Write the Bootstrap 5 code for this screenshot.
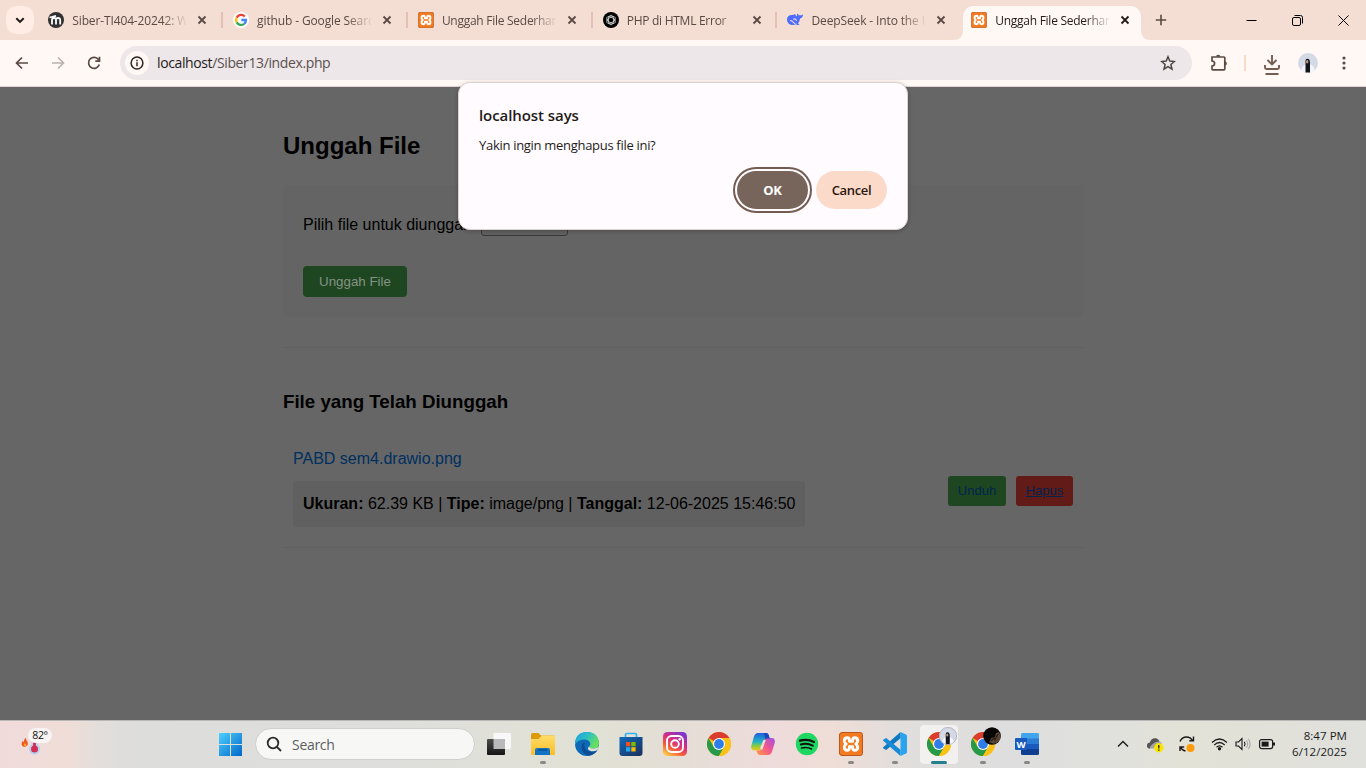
<!DOCTYPE html>
<html lang="id">
<head>
<meta charset="utf-8">
<title>Unggah File Sederhana</title>
<meta name="viewport" content="width=device-width, initial-scale=1">
<link href="https://cdn.jsdelivr.net/npm/bootstrap@5.3.0/dist/css/bootstrap.min.css" rel="stylesheet">
<style>
body{width:1366px;height:768px;overflow:hidden;font-family:"Open Sans","Noto Sans",sans-serif;font-size:12px;color:#1f1b19}
svg{display:block;flex:none}
.tabstrip{height:40px;background:#f4ddd3;padding-left:6px}
.tabmenu{width:28px;height:28px;border-radius:10px;background:#feece5;margin:6px 4.3px 0 0}
.tab-item{width:184.8px;height:40px;padding-left:10px;gap:8px;flex:none;color:#5b4a43}
.tab-item.sep::after{content:"";position:absolute;right:0;top:12px;width:2px;height:16px;background:#e2c0b3}
.tab-title{width:114px;font-size:12px;letter-spacing:-.27px;padding-top:1px;overflow:hidden;white-space:nowrap;-webkit-mask-image:linear-gradient(90deg,#000 90px,transparent 116px)}
.tab-title.wide{letter-spacing:-.13px}
.tab-on{color:#221a17}
.tab-on::before{content:"";position:absolute;z-index:0;left:1px;top:6px;width:178px;height:34px;background:#fff8f5;border-radius:10px 10px 0 0}
.tab-on{left:-.6px}
.tab-on>*{position:relative;z-index:1}
.flare{position:absolute!important;bottom:0;width:10px;height:10px}
.win{width:46px}
.toolbar{height:47px;background:#fff8f5;border-bottom:1px solid #dcd5d3;padding:0 14px}
.omni{width:1072px;height:34px;border-radius:17px;background:#ede7ea;margin-left:18px;padding:0 16px 0 5px}
.siteinfo{width:24px;height:24px;background:#fff8f5}
.url{font-size:14px;color:#5a504c;margin-left:8px;letter-spacing:-.38px;padding-bottom:1px}
.url b{font-weight:400;color:#1f1b19}
.viewport{height:633px;background:#666;font-family:"Liberation Sans",Arial,sans-serif;font-size:16px;line-height:18px;color:#000}
.page{width:800px}
.page h2{font-size:24px;line-height:28px;font-weight:700;margin:0 0 25px;padding-top:45px}
.upload{background:#646464;border-radius:5px;height:132px;padding:29px 20px 0}
.filebtn{width:87px;height:21px;border:1px solid #3a3a3a;border-radius:3px;margin-left:5px;background:#606060}
.green{background:#1e4620}.red{background:#621b16}
.send{width:104px;height:31px;border:0;border-radius:4px;color:#869387;font-size:13.33px;margin-top:30px}
.rule{height:1px;background:#5f5f5f}
.page h3{font-size:18.72px;line-height:22px;font-weight:700;margin:43px 0 37px}
.entry{height:98px;padding:0 10px;border-bottom:1px solid #5f5f5f}
.fname{color:#00305f}
.meta{background:#606060;border-radius:4px;padding:14px 10px;height:46px;margin-top:13px;white-space:nowrap;width:512px}
.act{width:58px;height:30px;border-radius:3px;color:#00254e;font-size:13px;padding:6px 0;text-align:center;text-decoration:none}
.act:last-child{width:57px;text-decoration:underline}
.prompt{left:458px;top:82px;width:450px;height:148px;border:1px solid #dcd3d1;border-radius:12px;background:#fffbff;box-shadow:0 1px 4px rgba(0,0,0,.25);padding:22px 20px 20px;z-index:10}
.prompt .ttl{font-size:15px;font-weight:600;line-height:20px;letter-spacing:-.07px}
.prompt .msg{font-size:13px;line-height:18px;margin-top:11px;letter-spacing:-.3px}
.pill{height:38px;border-radius:19px;font-size:13px;font-weight:600;border:0;letter-spacing:-.35px;padding:2px 0 0}
.pill.ok{width:71px;background:#77655c;color:#fff;outline:2px solid #735c51;outline-offset:2px;font-weight:700}
.pill.no{width:71px;background:#fbdaca;color:#2a1710}
.taskbar{height:48px;border-top:1px solid #b9b8b6;padding-bottom:1px;background:linear-gradient(90deg,#f0dbdb 0,#f0ddd7 68px,#e2dedb 100px,#dddddc 140px,#dedfdc 380px,#e1e1d5 590px,#e4ded6 680px,#eedbdb 768px,#efddd7 835px,#e1dedc 900px,#dedede 1010px,#e1e1dc 1130px,#e3e2d7 1180px,#e0e0dc 1366px)}
.weather{width:208px;padding-left:20px}
.temp{left:28px;top:7px;width:24px;height:15px;border-radius:8px;background:#f7f4f3;font-size:10.5px;letter-spacing:-.3px;line-height:15px;color:#111}
.search{width:220px;height:32px;border-radius:16px;background:#f7f7f6;border:1px solid #cfcfcd;margin:0 2px 0 3px;padding-left:10px;color:#5e5e5e;font-size:14px;letter-spacing:-.3px}
.tk{width:44px;height:46px}
.tk.run::after{content:"";position:absolute;bottom:3px;left:19px;width:6px;height:3px;border-radius:2px;background:#8a8886}
.tk.cur::before{content:"";position:absolute;left:3px;top:4px;width:38px;height:39px;border-radius:4px;background:#f2f1f0}
.tk.cur::after{left:14px;width:16px;background:#267f8f}
.tk svg{position:relative}
.clock{width:80px;text-align:right;line-height:16px;font-size:11.5px;letter-spacing:.05px;color:#1a1a1a}
</style>
</head>
<body>
<svg width="0" height="0" class="position-absolute">
<defs>
<linearGradient id="gw" x2="1" y2="1"><stop stop-color="#4fd0ff"/><stop offset="1" stop-color="#0067c8"/></linearGradient>
<linearGradient id="gf" x2="0" y2="1"><stop stop-color="#ffdd6a"/><stop offset="1" stop-color="#f8bd26"/></linearGradient>
<linearGradient id="ge" x1="0" x2="1" y2=".5"><stop stop-color="#1e9ddf"/><stop offset=".5" stop-color="#2bbfc6"/><stop offset="1" stop-color="#6ae05a"/></linearGradient>
<linearGradient id="gs" x2="1" y2="1"><stop stop-color="#0f6bbd"/><stop offset="1" stop-color="#1c2f5a"/></linearGradient>
<linearGradient id="gi" x1=".2" y1="1" x2=".8" y2="0"><stop stop-color="#ffc94a"/><stop offset=".3" stop-color="#f65d38"/><stop offset=".6" stop-color="#d62c86"/><stop offset="1" stop-color="#7538d2"/></linearGradient>
<linearGradient id="gc1" x2="0" y2="1"><stop stop-color="#1e5fdc"/><stop offset=".5" stop-color="#22b4c6"/><stop offset=".75" stop-color="#8bcc3c"/><stop offset="1" stop-color="#f6c51e"/></linearGradient>
<linearGradient id="gc2" x1="1" x2="0" y2="1"><stop stop-color="#a14fe6"/><stop offset=".5" stop-color="#f2588c"/><stop offset="1" stop-color="#ff9a3e"/></linearGradient>
<linearGradient id="gk" x2="0" y2="1"><stop stop-color="#4c4c4c"/><stop offset="1" stop-color="#151515"/></linearGradient>
<symbol id="x" viewBox="0 0 16 16"><path d="M4.500 4.500l7 7m0-7l-7 7" stroke="currentColor" stroke-width="1.800"/></symbol>
<symbol id="xampp" viewBox="0 0 24 24"><rect x=".5" y=".5" width="23" height="23" rx="2.500" fill="#f37a20" stroke="#b9581a"/><path d="M8.300 5.700q-3 0-3 3 0 2 1.900 3.300-1.900 1.300-1.900 3.300 0 3 3 3 2 0 2-2v-1.600h3.400v1.600q0 2 2 2 3 0 3-3 0-2-1.900-3.300 1.900-1.300 1.900-3.300 0-3-3-3-2 0-2 2v1.600h-3.400v-1.600q0-2-2-2z" fill="none" stroke="#fff" stroke-width="2.900" stroke-linejoin="round"/></symbol>
<symbol id="chrome" viewBox="0 0 24 24"><circle cx="12" cy="12" r="12" fill="#fbc116"/><path d="M12 12L1.600 6A12 12 0 0 1 22.400 6H12z" fill="#dc3b30"/><path d="M1.600 6A12 12 0 0 0 12 24l5.200-9L12 12 6.800 15z" fill="#269a48"/><path d="M12 24A12 12 0 0 0 22.400 6H12l5.200 9z" fill="#fbc116"/><circle cx="12" cy="12" r="6" fill="#fff"/><circle cx="12" cy="12" r="4.900" fill="#2f7de9"/></symbol>
<symbol id="person" viewBox="0 0 20 20"><circle cx="10" cy="10" r="10" fill="#d4d9e6"/><path d="M3.500 17.500q.5-5 4-6h5q3.500 1 4 6-6 4.500-13 0z" fill="#f4f7fa"/><path d="M7.500 19.500V10q-.5-4.300 2-4.300T12 10v9.500z" fill="#12141c"/><ellipse cx="9.200" cy="8.800" rx="1.200" ry="1.700" fill="#c49b83"/></symbol>
</defs>
</svg>

<header class="tabstrip d-flex">
  <div class="tabmenu d-flex align-items-center justify-content-center"><svg width="12" height="12" fill="none" stroke="#1f1b19" stroke-width="2"><path d="M2.300 4.200L6 7.900l3.700-3.700"/></svg></div>
  <div class="tab-item sep position-relative d-flex align-items-center"><svg width="16" height="16" viewBox="0 0 16 16"><circle cx="8" cy="8" r="8" fill="#303030"/><path d="M4 12.500V7.500q0-1.500 2-1.500t2 1.500v5m0-5q0-1.500 2-1.500t2.200 1.500v5M1.500 5.500L8 3.800" fill="none" stroke="#fff" stroke-width="1.800"/></svg><span class="tab-title wide">Siber-TI404-20242: W11</span><svg width="16" height="16"><use href="#x"/></svg></div>
  <div class="tab-item sep position-relative d-flex align-items-center"><svg width="16" height="16" viewBox="0 0 16 16"><circle cx="8" cy="8" r="8" fill="#fff"/><g fill="none" stroke-width="2.300"><path d="M11.800 4.500A5 5 0 0 0 3.700 5.600" stroke="#ea4335"/><path d="M3.700 5.600a5 5 0 0 0 0 4.800" stroke="#fbbc05"/><path d="M3.700 10.400a5 5 0 0 0 7.500 1.400" stroke="#34a853"/><path d="M11.200 11.800A5 5 0 0 0 13 8H8.300" stroke="#4285f4"/></g></svg><span class="tab-title wide">github - Google Search</span><svg width="16" height="16"><use href="#x"/></svg></div>
  <div class="tab-item sep position-relative d-flex align-items-center"><svg width="16" height="16"><use href="#xampp"/></svg><span class="tab-title">Unggah File Sederhana</span><svg width="16" height="16"><use href="#x"/></svg></div>
  <div class="tab-item sep position-relative d-flex align-items-center"><svg width="16" height="16" viewBox="0 0 16 16"><circle cx="8" cy="8" r="8" fill="#000"/><g fill="none" stroke="#ddd" stroke-width=".8"><ellipse cx="8" cy="8" rx="2.600" ry="4.800"/><ellipse cx="8" cy="8" rx="2.600" ry="4.800" transform="rotate(60 8 8)"/><ellipse cx="8" cy="8" rx="2.600" ry="4.800" transform="rotate(120 8 8)"/></g></svg><span class="tab-title">PHP di HTML Error</span><svg width="16" height="16"><use href="#x"/></svg></div>
  <div class="tab-item position-relative d-flex align-items-center"><svg width="16" height="16" viewBox="0 0 16 16"><path d="M0 8q0-5 5-5 2 0 3-1 .5 1.500 2 2.500.3-1.500 0-3 1.500.5 1.800 1.700 2 .5 4.200-.7-.2 3.500-3 4-.2 3.200-2 5l1.500 1.200q-2 .8-3.500-.2Q1 14.500 0 8z" fill="#4d6bfe"/><path d="M2 7q3-1 5 2t4 3q-2 1.500-4 .5Q3 12 2 7z" fill="#4d6bfe"/><path d="M3 8.500q2 0 3.500 2t3 1.800M6.300 7.200q2-1 3.300 1.500" stroke="#f4ddd3" stroke-width="1.200" fill="none"/></svg><span class="tab-title wide">DeepSeek - Into the Unknown</span><svg width="16" height="16"><use href="#x"/></svg></div>
  <div class="tab-item tab-on position-relative d-flex align-items-center"><svg class="flare" style="left:-9px" viewBox="0 0 10 10"><path d="M10 0v10H0Q10 10 10 0" fill="#fff8f5"/></svg><svg width="16" height="16" style="margin-left:-.4px"><use href="#xampp"/></svg><span class="tab-title">Unggah File Sederhana</span><svg width="16" height="16"><use href="#x"/></svg><svg class="flare" style="left:179px" viewBox="0 0 10 10"><path d="M0 0v10h10Q0 10 0 0" fill="#fff8f5"/></svg></div>
  <div class="d-flex align-items-center justify-content-center" style="width:22px;margin-left:3px"><svg width="12" height="12" stroke="#5b4a43" stroke-width="1.600"><path d="M6 .8v10.400M.8 6h10.400"/></svg></div>
  <div class="d-flex ms-auto me-0">
    <div class="win d-flex align-items-center justify-content-center"><svg width="11" height="11"><path d="M.5 5.500h10" stroke="#000"/></svg></div>
    <div class="win d-flex align-items-center justify-content-center"><svg width="11" height="11" fill="none" stroke="#000"><rect x=".5" y="2.500" width="8" height="8" rx="1.500"/><path d="M2.500.5h6q2 0 2 2v6"/></svg></div>
    <div class="win d-flex align-items-center justify-content-center"><svg width="11" height="11" stroke="#000"><path d="M.5.5l10 10m0-10l-10 10"/></svg></div>
  </div>
</header>

<nav class="toolbar d-flex align-items-center">
  <svg width="16" height="16" fill="none" stroke="#5b4a43" stroke-width="1.700"><path d="M14 8H3m5-5.500L2.500 8 8 13.500"/></svg>
  <svg style="margin-left:20px" width="16" height="16" fill="none" stroke="#bcb3af" stroke-width="1.700"><path d="M2 8h11M8 2.500L13.500 8 8 13.500"/></svg>
  <svg style="margin-left:20px" width="16" height="16" fill="none" stroke="#5b4a43" stroke-width="1.700"><path d="M13.300 9.500A5.500 5.500 0 1 1 12 4l1.200 1.400M13.500 1.800v4.400H9.300"/></svg>
  <div class="omni d-flex align-items-center">
    <div class="siteinfo rounded-circle d-flex align-items-center justify-content-center"><svg width="14" height="14" fill="none" stroke="#2c2522" stroke-width="1.500"><circle cx="7" cy="7" r="5.900"/><path d="M7 6.200v4M7 3.700v1.500"/></svg></div>
    <span class="url"><b>localhost</b>/Siber13/index.php</span>
    <svg class="ms-auto" width="16" height="16" fill="none" stroke="#4d4542" stroke-width="1.500"><path d="M8 1.800l1.800 4.300 4.600.4-3.500 3 1.100 4.600L8 11.600l-4 2.500 1.100-4.600-3.500-3 4.600-.4z"/></svg>
  </div>
  <svg style="margin-left:18px" width="18" height="18" fill="none" stroke="#5b4a43" stroke-width="1.700"><path d="M2 3h12q.8 0 .8.800V15q0 .8-.8.800H2.800Q2 15.800 2 15v-3q2.600-.2 2.600-2.500T2 7z"/><path d="M6.700 2.500q1.500-2 3 0M15 8q2 1.500 0 3" fill="#5b4a43"/></svg>
  <div style="width:2px;height:16px;background:#fbdaca;margin-left:16px"></div>
  <svg style="margin-left:17px;margin-top:3px" width="20" height="24" fill="none" stroke="#735c51" stroke-width="1.900"><path d="M9 2v9.500M4.500 7L9 11.500 13.500 7M2 12v2.500q0 1.500 1.500 1.500h11q1.500 0 1.500-1.500V12M2.500 21h13"/></svg>
  <svg style="margin-left:15px" width="20" height="20"><use href="#person"/></svg>
  <svg style="margin-left:24px" width="4" height="16" fill="#5b4a43"><circle cx="2" cy="3" r="1.600"/><circle cx="2" cy="8" r="1.600"/><circle cx="2" cy="13" r="1.600"/></svg>
</nav>

<main class="viewport">
  <div class="page mx-auto">
    <h2>Unggah File</h2>
    <div class="upload">
      <div class="d-flex align-items-center" style="height:22px"><span>Pilih file untuk diunggah:</span><span class="filebtn"></span></div>
      <button class="send green fw-normal">Unggah File</button>
    </div>
    <div class="rule" style="margin-top:30px"></div>
    <h3>File yang Telah Diunggah</h3>
    <div class="entry d-flex">
      <div>
        <div class="fname">PABD sem4.drawio.png</div>
        <div class="meta"><b>Ukuran:</b> 62.39 KB | <b>Tipe:</b> image/png | <b>Tanggal:</b> 12-06-2025 15:46:50</div>
      </div>
      <div class="d-flex ms-auto" style="gap:10px;padding-top:26px"><a class="act green" href="#">Unduh</a><a class="act red" href="#">Hapus</a></div>
    </div>
  </div>
</main>

<div class="prompt position-absolute">
  <div class="ttl">localhost says</div>
  <div class="msg">Yakin ingin menghapus file ini?</div>
  <div class="d-flex justify-content-end" style="gap:8px;margin-top:17px"><button class="pill ok">OK</button><button class="pill no">Cancel</button></div>
</div>

<footer class="taskbar d-flex align-items-center">
  <div class="weather position-relative h-100">
    <svg width="24" height="40" viewBox="0 0 24 40"><path d="M4.500 26q-3.500-1-2.800-4 .3-1.300 1-2 .3 1 1 1 .3-2.700 2-4.200.3 2.400 1.700 3.700 1.600 4.500-2.900 5.500z" fill="#ed5a24"/><path d="M4.800 25.500q-1.600-1.500.2-3.500 2 2 .8 3.500z" fill="#ffb638"/><circle cx="14.500" cy="28" r="5.500" fill="#b5d3f1"/><rect x="11.500" y="16" width="6" height="12" rx="3" fill="#b5d3f1"/><circle cx="14.500" cy="28" r="3.500" fill="#d62d55"/><path d="M14.500 19v8" stroke="#d62d55" stroke-width="2.800"/></svg>
    <div class="temp position-absolute text-center">82°</div>
  </div>
  <div class="tk d-flex align-items-center justify-content-center"><svg width="23" height="23" fill="url(#gw)"><path d="M0 0h11v11H0zM12 0h11v11H12zM0 12h11v11H0zM12 12h11v11H12z"/></svg></div>
  <div class="search d-flex align-items-center"><svg width="16" height="16" fill="none" stroke="#2b2b2b" stroke-width="1.800"><circle cx="7" cy="7" r="5.300"/><path d="M11 11l4 4"/></svg><span style="margin-left:10px">Search</span></div>
  <div class="tk d-flex align-items-center justify-content-center"><svg width="24" height="24"><rect x="6.500" y="1" width="17.500" height="16" rx="1" fill="#f8f8f8"/><rect y="7" width="18" height="16" rx="1" fill="url(#gk)"/><path d="M6.500 7H18v10H6.500z" fill="#b9b9b9"/></svg></div>
  <div class="tk run position-relative d-flex align-items-center justify-content-center"><svg width="24" height="24"><path d="M0 2.500Q0 1 1.500 1h6L10 3.500h13v8H0z" fill="#dc9b0b"/><path d="M0 7h7.500L11 3.500h13V22q0 1-1 1H1q-1 0-1-1z" fill="url(#gf)"/><path d="M4 23v-5q0-2 2-2h11q2 0 2 2v5z" fill="#1273c4"/><path d="M7 18h9" stroke="#0b4f93" stroke-width="1.500"/></svg></div>
  <div class="tk d-flex align-items-center justify-content-center"><svg width="24" height="24"><circle cx="12" cy="12" r="12" fill="#0d6ab8"/><path d="M0 11Q1 0 12 0t12 11q0 5.500-6 5.500-4 0-3.500-2.500 1.500-1.500.5-3.500-1.500-3-5.500-3Q2 7.500 0 13z" fill="url(#ge)"/><path d="M8 10.500q-4.500 9 5 13 5.500 0 9.300-5-9.300 3.500-12.300-2.500-1.500-3 0-5.500z" fill="#104c92"/><path d="M24 12q0 4.500-6 4.500-4 0-3.500-2.500Q11 17 15 18.700q4 1.300 7.300-.7Q24 16 24 12z" fill="#e1e1d7"/></svg></div>
  <div class="tk d-flex align-items-center justify-content-center"><svg width="24" height="24"><path d="M6.500 6V2.800q0-1.300 1.300-1.300h8.400q1.300 0 1.300 1.300V6" fill="none" stroke="#32b2ee" stroke-width="1.700"/><path d="M.5 5h23v16q0 3-3 3h-17q-3 0-3-3z" fill="url(#gs)"/><path d="M7 10h4.300v4.300H7z" fill="#f25022"/><path d="M12.300 10h4.300v4.300h-4.300z" fill="#7fba00"/><path d="M7 15.200h4.300v4.300H7z" fill="#23a9f1"/><path d="M12.300 15.200h4.300v4.300h-4.300z" fill="#ffb900"/></svg></div>
  <div class="tk d-flex align-items-center justify-content-center"><svg width="24" height="24"><rect width="24" height="24" rx="4.500" fill="url(#gi)"/><g fill="none" stroke="#fff" stroke-width="1.900"><rect x="4" y="4" width="16" height="16" rx="4.500"/><circle cx="12" cy="12" r="3.800"/></g><circle cx="16.700" cy="7.300" r="1.200" fill="#fff"/></svg></div>
  <div class="tk d-flex align-items-center justify-content-center"><svg width="24" height="24"><use href="#chrome"/></svg></div>
  <div class="tk d-flex align-items-center justify-content-center"><svg width="24" height="24"><path d="M7 1h8q2 0 2.700 2l1 3.500h-3q-2 0-2.700 2L10.500 16q-.8 2.500-3 2.500H3Q-.5 18 .3 13.500L3 4.500Q4 1 7 1z" fill="url(#gc1)"/><path d="M17 23H9q-2 0-2.700-2l-.8-2.500H8q2 0 2.700-2L13 8.500q.8-2.500 3-2.500h5q3.500.5 2.700 5L21 19.500q-1 3.500-4 3.500z" fill="url(#gc2)"/><path d="M13 1h2q2 0 2.700 2l1 3.500h-3q-1 0-1.700.700z" fill="#1849bd"/><path d="M9.300 15.500l3.200-7.500h2.300l-3 8.500q-.5 1-1.500 1.500z" fill="#f0dcdb"/></svg></div>
  <div class="tk d-flex align-items-center justify-content-center"><svg width="24" height="24"><circle cx="12" cy="12" r="11.200" fill="#1ed760"/><g fill="none" stroke="#111" stroke-linecap="round"><path d="M5 8.700q7.500-2.200 14 1.300" stroke-width="2.300"/><path d="M5.800 12.500q6.500-1.800 12 1.200" stroke-width="1.900"/><path d="M6.500 16q5.500-1.500 10 1" stroke-width="1.500"/></g></svg></div>
  <div class="tk run position-relative d-flex align-items-center justify-content-center"><svg width="24" height="24"><use href="#xampp"/></svg></div>
  <div class="tk run position-relative d-flex align-items-center justify-content-center"><svg width="24" height="24"><path d="M17.500 0L23 2.400Q24 3 24 4v16q0 1-1 1.600L17.500 24z" fill="#2aa4ee"/><path d="M17.500 0v6.300L3.200 18 .5 16.600Q-.3 16 .5 15z" fill="#0d79c3"/><path d="M17.500 24v-6.300L3.200 6 .5 7.400q-.8.700 0 1.600z" fill="#178bd8"/></svg></div>
  <div class="tk run cur position-relative d-flex align-items-center justify-content-center"><svg width="24" height="24"><use href="#chrome"/></svg><svg class="position-absolute" style="left:22px;top:6px" width="18" height="18"><use href="#person"/><circle cx="9" cy="9" r="8.600" fill="none" stroke="#a8abb4" stroke-width=".7"/></svg></div>
  <div class="tk run position-relative d-flex align-items-center justify-content-center"><svg width="24" height="24"><use href="#chrome"/></svg><svg class="position-absolute" style="left:22px;top:6px" width="18" height="18"><circle cx="9" cy="9" r="8.800" fill="#080706"/><path d="M6 15q2-2 2-4l4-1 1-4 3-1q3 5 0 9-4 5-10 1z" fill="#594535"/><path d="M8 14l3-3 1 2 3-6" stroke="#2b2018" stroke-width="1.300" fill="none"/></svg></div>
  <div class="tk run position-relative d-flex align-items-center justify-content-center"><svg width="24" height="24"><path d="M6 2.500Q6 1 7.500 1h15Q24 1 24 2.500V7H6z" fill="#41a5ee"/><path d="M6 6.500h18V12H6z" fill="#2b7cd3"/><path d="M6 12h18v5.500H6z" fill="#185abd"/><path d="M6 17h18v4.500q0 1.500-1.500 1.500h-15Q6 23 6 21.500z" fill="#103f91"/><rect y="6" width="12" height="12" rx="1" fill="#185abd"/><text x="6" y="15.500" text-anchor="middle" font-family="Open Sans" font-size="9.500" font-weight="700" fill="#fff">W</text></svg></div>
  <div class="d-flex align-items-center ms-auto" style="margin-right:19px">
    <svg width="12" height="12" fill="none" stroke="#1a1a1a" stroke-width="1.400"><path d="M1 8.500l5-5 5 5"/></svg>
    <svg style="margin-left:17px" width="18" height="18"><path d="M4 13.500q-3.500-.3-3-3.500.3-2.300 3-2.600Q5.300 3 9.500 3.200q3 .3 4 3.300 2.500.6 2.200 3.500l-5 3.500z" fill="#a2a2a2"/><path d="M4 13.500q-3.500-.3-3-3.500.3-2.300 3-2.600Q5.300 3 9.500 3.200q3 .3 4 3.300-4-.5-7.500 3-2.500 1.500-2 4z" fill="#555"/><circle cx="12.800" cy="12.800" r="4.700" fill="#fbe400"/><path d="M12.800 10v3.500m0 1v1.300" stroke="#222" stroke-width="1.300"/></svg>
    <svg style="margin-left:14px" width="18" height="18" fill="none" stroke="#1a1a1a" stroke-width="1.400"><path d="M2 6.500Q4 2 8.500 2q4 0 6 3.500M15.500 1.500v4.200h-4.200M7.500 16Q4 15.500 2.500 12M2 16v-4h4.200"/><circle cx="12.500" cy="13" r="4" fill="#ff9a0a" stroke="none"/></svg>
    <svg style="margin-left:15px" width="17" height="14" fill="none" stroke="#1a1a1a" stroke-width="1.200"><path d="M1 5.500q7.500-7 15 0M3.300 8q5.200-5 10.400 0M5.500 10.200q3-2.700 6 0"/><circle cx="8.500" cy="11.800" r="1.100" fill="#1a1a1a"/></svg>
    <svg style="margin-left:7px" width="17" height="14" fill="none" stroke="#1a1a1a" stroke-width="1.100"><path d="M1 5h2.500L7 1.500v11L3.500 9H1z"/><path d="M9.300 4.800q1.500 2.200 0 4.400" /><path d="M11.300 3.200q2.700 3.800 0 7.600M13.300 1.700q3.700 5.300 0 10.600" stroke="#aaa"/></svg>
    <svg style="margin-left:7px" width="17" height="12" fill="none" stroke="#1a1a1a" stroke-width="1.200"><rect x=".6" y="1.600" width="13" height="9" rx="2"/><rect x="2.600" y="3.600" width="7" height="5" fill="#1a1a1a" stroke="none"/><path d="M15 4.500v3" stroke-width="2"/></svg>
    <div class="clock" style="margin-left:-9px">8:47 PM<br>6/12/2025</div>
  </div>
</footer>
<script src="https://cdn.jsdelivr.net/npm/bootstrap@5.3.0/dist/js/bootstrap.bundle.min.js"></script>
</body>
</html>
